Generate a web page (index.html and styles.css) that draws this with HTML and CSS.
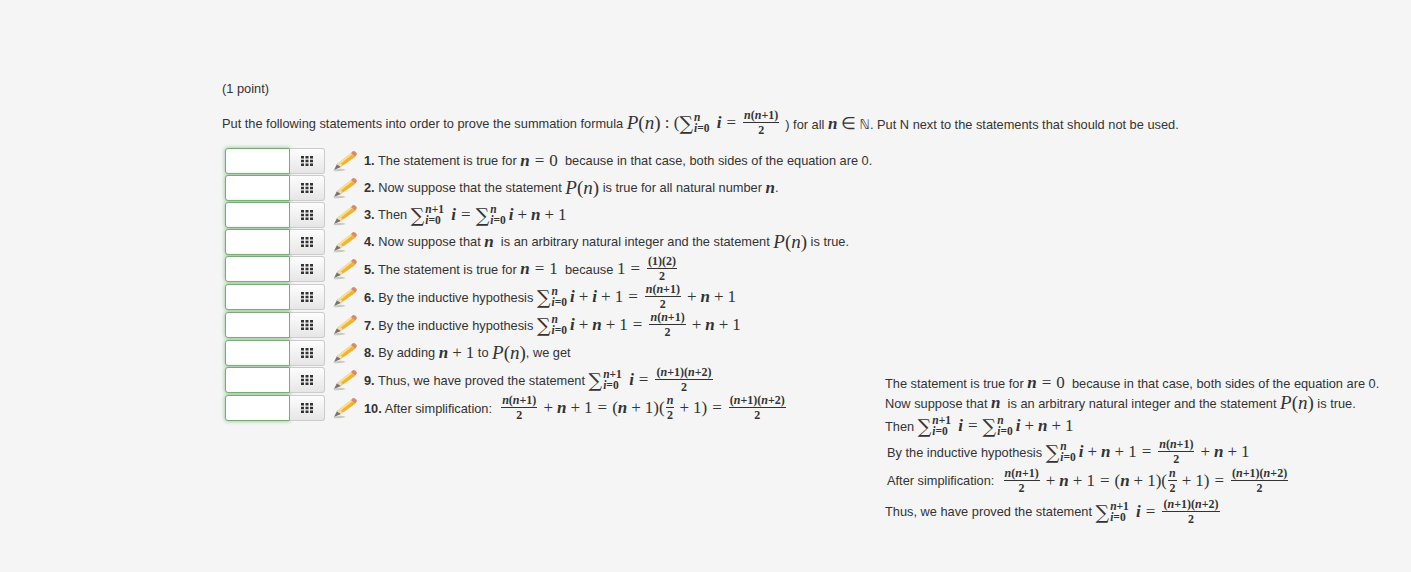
FILE: index.html
```html
<!DOCTYPE html>
<html lang="en">
<head>
    <meta charset="UTF-8">
    <meta name="viewport" content="width=device-width, initial-scale=1.0">
    <title>Problem</title>
    <link rel="stylesheet" href="styles.css">
</head>
<body>
    <svg class="defs" width="0" height="0">
        <symbol id="pencil" viewBox="0 0 24 22">
            <path d="M0 21 Q6 17 13 20 Q7 22 0 21 Z" fill="#c9c9c2"/>
            <path d="M1 20 L4 14 L8 17 Z" fill="#77756b"/>
            <path d="M4 14 L18 3 L22 7 L8 17 Z" fill="#f2b233"/>
            <path d="M4 14 L18 3 L19 4.5 L5.5 15.5 Z" fill="#fbe08e"/>
            <path d="M4 14 L6.5 12 L10 15.5 L8 17 Z" fill="#ecd9b4"/>
            <path d="M18 3 L20 1 Q23 1 24 4 L22 7 Z" fill="#d98a68"/>
        </symbol>
        <symbol id="grid" viewBox="0 0 12 10">
            <path d="M0 0h3v2.6H0zM4.5 0h3v2.6h-3zM9 0h3v2.6H9zM0 3.7h3v2.6H0zM4.5 3.7h3v2.6h-3zM9 3.7h3v2.6H9zM0 7.4h3V10H0zM4.5 7.4h3V10h-3zM9 7.4h3V10H9z" fill="#333"/>
        </symbol>
    </svg>

    <main class="problem">
        <p class="points">(1 point)</p>
        <p class="prompt">Put the following statements into order to prove the summation formula <span class="m big">P</span><span class="m big up">(<i>n</i>)</span><span class="m up"> : (</span><span class="sum"><span class="sigma">∑</span><span class="limits"><span><i>n</i></span><span><i>i</i>=0</span></span></span><span class="m"> i</span><span class="m up eq">=</span><span class="frac"><span><i>n</i>(<i>n</i>+1)</span><span>2</span></span><span class="after-frac">) for all <span class="m">n</span> <span class="m up">∈</span> <span class="bb">ℕ</span>. Put N next to the statements that should not be used.</span></p>

        <div class="work">
            <ol class="rows">
                <li class="row">
                    <div class="picker"><input class="box" type="text"><button class="grid-btn" type="button"><svg class="grid-icon"><use href="#grid"/></svg></button></div>
                    <svg class="pencil"><use href="#pencil"/></svg>
                    <div class="stmt"><b>1.</b> The statement is true for <span class="m">n</span><span class="m up eq">=</span><span class="m up">0</span> &nbsp;because in that case, both sides of the equation are 0.</div>
                </li>
                <li class="row">
                    <div class="picker"><input class="box" type="text"><button class="grid-btn" type="button"><svg class="grid-icon"><use href="#grid"/></svg></button></div>
                    <svg class="pencil"><use href="#pencil"/></svg>
                    <div class="stmt"><b>2.</b> Now suppose that the statement <span class="m big">P</span><span class="m big up">(<i>n</i>)</span> is true for all natural number <span class="m">n</span>.</div>
                </li>
                <li class="row">
                    <div class="picker"><input class="box" type="text"><button class="grid-btn" type="button"><svg class="grid-icon"><use href="#grid"/></svg></button></div>
                    <svg class="pencil"><use href="#pencil"/></svg>
                    <div class="stmt"><b>3.</b> Then <span class="sum"><span class="sigma">∑</span><span class="limits"><span><i>n</i>+1</span><span><i>i</i>=0</span></span></span><span class="m"> i</span><span class="m up eq">=</span><span class="sum"><span class="sigma">∑</span><span class="limits"><span><i>n</i></span><span><i>i</i>=0</span></span></span><span class="m">i</span><span class="m up op">+</span><span class="m">n</span><span class="m up op">+</span><span class="m up">1</span></div>
                </li>
                <li class="row">
                    <div class="picker"><input class="box" type="text"><button class="grid-btn" type="button"><svg class="grid-icon"><use href="#grid"/></svg></button></div>
                    <svg class="pencil"><use href="#pencil"/></svg>
                    <div class="stmt"><b>4.</b> Now suppose that <span class="m">n</span> &nbsp;is an arbitrary natural integer and the statement <span class="m big">P</span><span class="m big up">(<i>n</i>)</span> is true.</div>
                </li>
                <li class="row tall">
                    <div class="picker"><input class="box" type="text"><button class="grid-btn" type="button"><svg class="grid-icon"><use href="#grid"/></svg></button></div>
                    <svg class="pencil"><use href="#pencil"/></svg>
                    <div class="stmt"><b>5.</b> The statement is true for <span class="m">n</span><span class="m up eq">=</span><span class="m up">1</span> &nbsp;because <span class="m up">1</span><span class="m up eq">=</span><span class="frac"><span>(1)(2)</span><span>2</span></span></div>
                </li>
                <li class="row tall">
                    <div class="picker"><input class="box" type="text"><button class="grid-btn" type="button"><svg class="grid-icon"><use href="#grid"/></svg></button></div>
                    <svg class="pencil"><use href="#pencil"/></svg>
                    <div class="stmt"><b>6.</b> By the inductive hypothesis <span class="sum"><span class="sigma">∑</span><span class="limits"><span><i>n</i></span><span><i>i</i>=0</span></span></span><span class="m">i</span><span class="m up op">+</span><span class="m">i</span><span class="m up op">+</span><span class="m up">1</span><span class="m up eq">=</span><span class="frac"><span><i>n</i>(<i>n</i>+1)</span><span>2</span></span><span class="m up op">+</span><span class="m">n</span><span class="m up op">+</span><span class="m up">1</span></div>
                </li>
                <li class="row tall">
                    <div class="picker"><input class="box" type="text"><button class="grid-btn" type="button"><svg class="grid-icon"><use href="#grid"/></svg></button></div>
                    <svg class="pencil"><use href="#pencil"/></svg>
                    <div class="stmt"><b>7.</b> By the inductive hypothesis <span class="sum"><span class="sigma">∑</span><span class="limits"><span><i>n</i></span><span><i>i</i>=0</span></span></span><span class="m">i</span><span class="m up op">+</span><span class="m">n</span><span class="m up op">+</span><span class="m up">1</span><span class="m up eq">=</span><span class="frac"><span><i>n</i>(<i>n</i>+1)</span><span>2</span></span><span class="m up op">+</span><span class="m">n</span><span class="m up op">+</span><span class="m up">1</span></div>
                </li>
                <li class="row">
                    <div class="picker"><input class="box" type="text"><button class="grid-btn" type="button"><svg class="grid-icon"><use href="#grid"/></svg></button></div>
                    <svg class="pencil"><use href="#pencil"/></svg>
                    <div class="stmt"><b>8.</b> By adding <span class="m">n</span><span class="m up op">+</span><span class="m up">1</span> to <span class="m big">P</span><span class="m big up">(<i>n</i>)</span>, we get</div>
                </li>
                <li class="row tall">
                    <div class="picker"><input class="box" type="text"><button class="grid-btn" type="button"><svg class="grid-icon"><use href="#grid"/></svg></button></div>
                    <svg class="pencil"><use href="#pencil"/></svg>
                    <div class="stmt"><b>9.</b> Thus, we have proved the statement <span class="sum"><span class="sigma">∑</span><span class="limits"><span><i>n</i>+1</span><span><i>i</i>=0</span></span></span><span class="m"> i</span><span class="m up eq">=</span><span class="frac"><span>(<i>n</i>+1)(<i>n</i>+2)</span><span>2</span></span></div>
                </li>
                <li class="row tall">
                    <div class="picker"><input class="box" type="text"><button class="grid-btn" type="button"><svg class="grid-icon"><use href="#grid"/></svg></button></div>
                    <svg class="pencil"><use href="#pencil"/></svg>
                    <div class="stmt"><b>10.</b> After simplification: &nbsp;<span class="frac"><span><i>n</i>(<i>n</i>+1)</span><span>2</span></span><span class="m up op">+</span><span class="m">n</span><span class="m up op">+</span><span class="m up">1</span><span class="m up eq">=</span><span class="m up">(</span><span class="m">n</span><span class="m up op">+</span><span class="m up">1)(</span><span class="frac small"><span><i>n</i></span><span>2</span></span><span class="m up op">+</span><span class="m up">1)</span><span class="m up eq">=</span><span class="frac"><span>(<i>n</i>+1)(<i>n</i>+2)</span><span>2</span></span></div>
                </li>
            </ol>

            <div class="answer">
                <div class="line">The statement is true for <span class="m">n</span><span class="m up eq">=</span><span class="m up">0</span> &nbsp;because in that case, both sides of the equation are 0.</div>
                <div class="line">Now suppose that <span class="m">n</span> &nbsp;is an arbitrary natural integer and the statement <span class="m big">P</span><span class="m big up">(<i>n</i>)</span> is true.</div>
                <div class="line sum-line">Then <span class="sum"><span class="sigma">∑</span><span class="limits"><span><i>n</i>+1</span><span><i>i</i>=0</span></span></span><span class="m"> i</span><span class="m up eq">=</span><span class="sum"><span class="sigma">∑</span><span class="limits"><span><i>n</i></span><span><i>i</i>=0</span></span></span><span class="m">i</span><span class="m up op">+</span><span class="m">n</span><span class="m up op">+</span><span class="m up">1</span></div>
                <div class="line sum-line nudge">By the inductive hypothesis <span class="sum"><span class="sigma">∑</span><span class="limits"><span><i>n</i></span><span><i>i</i>=0</span></span></span><span class="m">i</span><span class="m up op">+</span><span class="m">n</span><span class="m up op">+</span><span class="m up">1</span><span class="m up eq">=</span><span class="frac"><span><i>n</i>(<i>n</i>+1)</span><span>2</span></span><span class="m up op">+</span><span class="m">n</span><span class="m up op">+</span><span class="m up">1</span></div>
                <div class="line frac-line nudge">After simplification: &nbsp;<span class="frac"><span><i>n</i>(<i>n</i>+1)</span><span>2</span></span><span class="m up op">+</span><span class="m">n</span><span class="m up op">+</span><span class="m up">1</span><span class="m up eq">=</span><span class="m up">(</span><span class="m">n</span><span class="m up op">+</span><span class="m up">1)(</span><span class="frac small"><span><i>n</i></span><span>2</span></span><span class="m up op">+</span><span class="m up">1)</span><span class="m up eq">=</span><span class="frac"><span>(<i>n</i>+1)(<i>n</i>+2)</span><span>2</span></span></div>
                <div class="line frac-line">Thus, we have proved the statement <span class="sum"><span class="sigma">∑</span><span class="limits"><span><i>n</i>+1</span><span><i>i</i>=0</span></span></span><span class="m"> i</span><span class="m up eq">=</span><span class="frac"><span>(<i>n</i>+1)(<i>n</i>+2)</span><span>2</span></span></div>
            </div>
        </div>
    </main>
</body>
</html>
```

FILE: styles.css
```css
body {
    font-family: "Liberation Sans", Arial, sans-serif;
    font-size: 12.8px;
    color: #333;
    background-color: #f5f5f5;
    margin: 0;
    height: 572px;
    overflow: hidden;
}
.defs {
    display: block;
    height: 0;
}
.problem {
    padding: 80px 0 0 222px;
}
.points {
    margin: 0;
    line-height: 17px;
}
.prompt {
    margin: 14px 0 0;
    height: 24px;
    display: flex;
    align-items: center;
    white-space: pre-wrap;
}
.after-frac {
    margin-left: 4px;
}
.work {
    display: flex;
    margin-top: 12px;
}
.rows {
    list-style-type: none;
    margin: 0;
    padding: 0 0 0 3px;
    width: 660px;
    flex: none;
}
.row {
    display: flex;
    align-items: center;
    height: 27px;
}
.tall {
    height: 28px;
}
.picker {
    display: flex;
    height: 26px;
    flex: none;
}
.box {
    box-sizing: border-box;
    width: 65px;
    height: 26px;
    margin: 0;
    padding: 0;
    background-color: #fff;
    border: 1px solid #79ab79;
    border-radius: 3px 0 0 3px;
    box-shadow: 0 0 4px #86ba86;
}
.grid-btn {
    box-sizing: border-box;
    width: 35px;
    height: 26px;
    padding: 0;
    border: 1px solid #ccc;
    border-left: none;
    border-radius: 0 3px 3px 0;
    background: linear-gradient(#fdfdfd, #e6e6e6);
    display: flex;
    align-items: center;
    justify-content: center;
}
.grid-icon {
    width: 12px;
    height: 10px;
}
.pencil {
    width: 24px;
    height: 22px;
    margin: 0 7px 0 8px;
    flex: none;
}
.stmt, .line {
    display: flex;
    align-items: center;
    white-space: pre;
}
.m {
    font-family: "Liberation Serif", serif;
    font-style: italic;
    font-weight: bold;
    font-size: 17px;
}
.up {
    font-style: normal;
    font-weight: normal;
}
.up i {
    font-weight: bold;
}
.big {
    font-size: 19px;
    font-weight: normal;
}
.big i {
    font-weight: normal;
}
.eq {
    margin: 0 5px;
}
.op {
    margin: 0 4px;
}
.bb {
    font-family: "DejaVu Sans", sans-serif;
    font-size: 13px;
}
.sum {
    display: inline-flex;
    align-items: center;
    margin-right: 3px;
}
.sigma {
    font-family: "DejaVu Serif", serif;
    font-size: 19px;
    line-height: 22px;
}
.limits {
    display: flex;
    flex-direction: column;
    font-family: "Liberation Serif", serif;
    font-size: 11.5px;
    font-weight: bold;
    line-height: 11px;
    margin-left: 1px;
}
.frac {
    display: inline-flex;
    flex-direction: column;
    align-items: center;
    font-family: "Liberation Serif", serif;
    font-size: 12px;
    font-weight: bold;
    line-height: 14px;
    margin: 0 2px;
    padding-bottom: 1px;
}
.frac span:first-child {
    border-bottom: 1px solid #333;
    padding: 0 1px;
    align-self: stretch;
    text-align: center;
}
.small {
    margin: 0 1px;
}
.answer {
    padding-top: 226px;
}
.line {
    height: 20px;
}
.sum-line {
    height: 26px;
}
.frac-line {
    height: 31px;
}
.nudge {
    margin-left: 2px;
}
```
